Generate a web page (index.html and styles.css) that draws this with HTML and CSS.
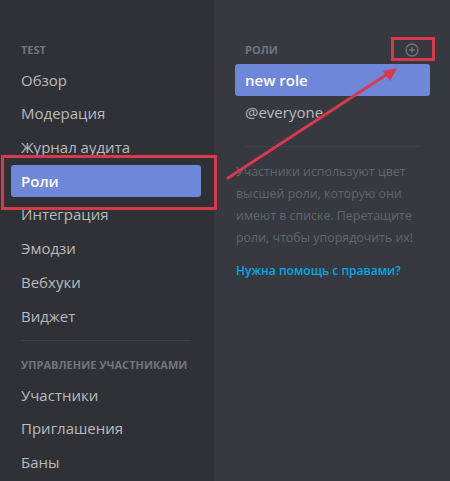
FILE: index.html
```html
<!DOCTYPE html>
<html lang="ru">
<head>
<meta charset="utf-8">
<link rel="stylesheet" href="styles.css">
</head>
<body>
<div class="app">
  <nav class="sidebar">
    <div class="group-title">Test</div>
    <div class="item">Обзор</div>
    <div class="item">Модерация</div>
    <div class="item">Журнал аудита</div>
    <div class="item selected">Роли</div>
    <div class="item">Интеграция</div>
    <div class="item">Эмодзи</div>
    <div class="item">Вебхуки</div>
    <div class="item">Виджет</div>
    <div class="sep"></div>
    <div class="group-title">Управление участниками</div>
    <div class="item">Участники</div>
    <div class="item">Приглашения</div>
    <div class="item">Баны</div>
  </nav>
  <main class="content">
    <div class="roles-head">
      <span class="group-title">Роли</span>
      <svg class="add" width="14" height="14" viewBox="0 0 14 14"><circle cx="7" cy="7" r="6" fill="none" stroke="#72767d" stroke-width="1.3"/><path d="M7 4v6M4 7h6" stroke="#72767d" stroke-width="1.3"/></svg>
    </div>
    <div class="role selected">new role</div>
    <div class="role">@everyone</div>
    <div class="sep wide"></div>
    <p class="hint">Участники используют цвет высшей роли, которую они имеют в списке. Перетащите роли, чтобы упорядочить их!</p>
    <a class="help">Нужна помощь с правами?</a>
  </main>
</div>
<div class="mark mark-left"></div>
<div class="mark mark-right"></div>
<svg class="arrow" width="450" height="481" viewBox="0 0 450 481">
  <line x1="228" y1="178" x2="389" y2="73" stroke="#d9394a" stroke-width="3" stroke-linecap="round"/>
  <path d="M397 68 L383 71 L390 81 Z" fill="#d9394a"/>
</svg>
</body>
</html>
```
FILE: styles.css
```css
html, body {
  margin: 0;
  padding: 0;
  background: #36393f;
}
body {
  font-family: "Open Sans", "Noto Sans", sans-serif;
  width: 450px;
  height: 481px;
  overflow: hidden;
  position: relative;
}
.app {
  display: flex;
  height: 481px;
}
.sidebar {
  width: 214px;
  flex: none;
  background: #2f3136;
  box-sizing: border-box;
  padding: 42px 13px 0 11px;
  display: flex;
  flex-direction: column;
  gap: 1.7px;
}
.group-title {
  font-size: 11px;
  font-weight: 700;
  text-transform: uppercase;
  color: #72767d;
  padding-left: 10px;
  height: 16px;
  line-height: 16px;
  margin-bottom: 4px;
  letter-spacing: 0;
}
.item {
  height: 32px;
  line-height: 32px;
  padding-left: 10px;
  font-size: 15px;
  color: #b9bbbe;
  border-radius: 3px;
}
.item.selected, .role.selected {
  background: #6f87d8;
  color: #fff;
  font-weight: 600;
}
.sep {
  height: 1px;
  background: #3c3f45;
  margin: 7px 10px 14px 10px;
}
.content {
  flex: 1;
  padding: 42px 20px 0 21px;
}
.roles-head {
  display: flex;
  justify-content: space-between;
  align-items: center;
  height: 16px;
  margin-bottom: 6px;
  padding-right: 11px;
}
.roles-head .group-title {
  margin: 0;
}
.role {
  height: 32px;
  line-height: 32px;
  padding-left: 10px;
  font-size: 15px;
  color: #b9bbbe;
  border-radius: 3px;
}
.sep.wide {
  margin: 18px 10px 0 10px;
  background: #3e4148;
}
.hint {
  margin: 14px 0 0 1px;
  font-size: 12.4px;
  line-height: 22px;
  color: #62666d;
}
.help {
  display: block;
  margin: 13px 0 0 1px;
  font-size: 12px;
  font-weight: 600;
  color: #00a8e8;
}
.mark {
  position: absolute;
  border: 3px solid #d9394a;
  box-sizing: border-box;
}
.mark-left {
  left: 1px;
  top: 155px;
  width: 216px;
  height: 55px;
}
.mark-right {
  left: 391px;
  top: 37px;
  width: 44px;
  height: 24px;
}
.arrow {
  position: absolute;
  left: 0;
  top: 0;
  pointer-events: none;
}
```
